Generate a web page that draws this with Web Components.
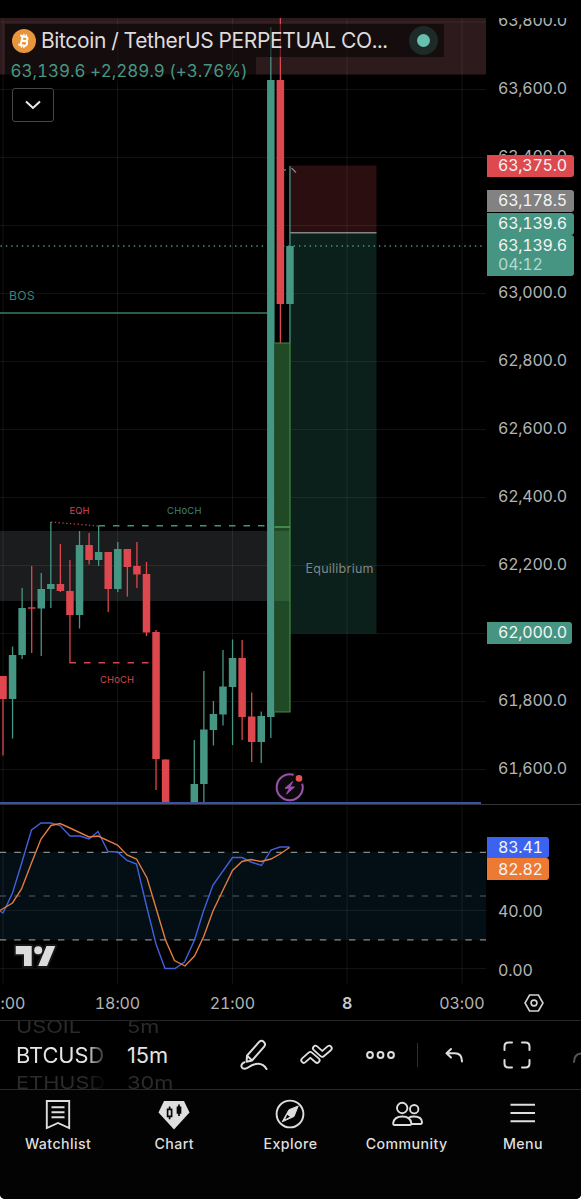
<!DOCTYPE html>
<html lang="en">
<head>
<meta charset="utf-8">
<title>BTCUSDT Chart</title>
<style>
  html, body {
    margin: 0;
    background: #fff;
  }
  body {
    font-family: Inter, "Liberation Sans", sans-serif;
  }
</style>
</head>
<body>
<chart-app></chart-app>

<template id="chart-app">
  <style>
    :host {
      display: flex;
      flex-direction: column;
      width: 581px;
      height: 1199px;
      overflow: hidden;
      background: #000;
      border-radius: 0 0 5px 5px;
      color: #b4b4b4;
      font-variant-numeric: tabular-nums;
    }
    .pane {
      display: flex;
      position: relative;
      box-sizing: border-box;
    }
    .main {
      height: 804px;
      padding-top: 18px;
    }
    .osc {
      height: 180px;
      border-top: 1px solid #343434;
    }
    chart-legend {
      position: absolute;
      left: 5px;
      top: 24px;
    }
    tv-logo {
      position: absolute;
      left: 11px;
      top: 136px;
    }
  </style>
  <div class="pane main">
    <price-chart></price-chart>
    <price-scale></price-scale>
    <chart-legend change="63,139.6 +2,289.9 (+3.76%)">Bitcoin / TetherUS PERPETUAL CO...</chart-legend>
  </div>
  <div class="pane osc">
    <stoch-chart></stoch-chart>
    <stoch-scale></stoch-scale>
    <tv-logo></tv-logo>
  </div>
  <time-scale></time-scale>
  <chart-toolbar></chart-toolbar>
  <tab-bar>
    <tab-item icon="watchlist">Watchlist</tab-item>
    <tab-item icon="chart">Chart</tab-item>
    <tab-item icon="explore">Explore</tab-item>
    <tab-item icon="community">Community</tab-item>
    <tab-item icon="menu">Menu</tab-item>
  </tab-bar>
</template>

<template id="chart-legend">
  <style>
    :host {
      display: flex;
      flex-direction: column;
      align-items: flex-start;
    }
    .title {
      display: flex;
      align-items: center;
      box-sizing: border-box;
      width: 438.5px;
      height: 33px;
      padding-left: 7px;
      background: rgba(0, 0, 0, .53);
      color: #dedbdb;
      font-size: 21px;
      white-space: nowrap;
    }
    .name {
      width: 361px;
      margin-left: 5px;
      letter-spacing: -.38px;
    }
    .status {
      display: flex;
      align-items: center;
      justify-content: center;
      width: 29px;
      height: 29px;
      margin-left: 7px;
      border-radius: 50%;
      background: #1d2a28;
    }
    .status i {
      width: 13.5px;
      height: 13.5px;
      border-radius: 50%;
      background: #67bfad;
    }
    .change {
      box-sizing: border-box;
      width: 251px;
      height: 27px;
      padding-left: 5.5px;
      background: rgba(0, 0, 0, .53);
      color: #459783;
      font-size: 17px;
      line-height: 29px;
      letter-spacing: -.05px;
      white-space: nowrap;
    }
    button {
      display: flex;
      align-items: center;
      justify-content: center;
      box-sizing: border-box;
      width: 42px;
      height: 34px;
      margin: 4px 0 0 7px;
      padding: 0;
      border: 1px solid #464646;
      border-radius: 3px;
      background: #000;
    }
  </style>
  <div class="title">
    <svg width="24" height="24" viewBox="0 0 24 24">
      <circle cx="12" cy="12" r="12" fill="#e9953b"/>
      <g transform="rotate(12 12 12)" fill="none" stroke="#fff" stroke-width="2">
        <path d="M7.2 7.5h5.6a2.1 2.1 0 0 1 0 4.3H9.4M7.2 16.5h6a2.3 2.3 0 0 0 0-4.7M9.6 7.5v9"/>
        <path d="M10.6 5v2.3M13.2 5v2.3M10.6 16.7V19M13.2 16.7V19" stroke-width="1.4"/>
      </g>
    </svg>
    <span class="name"><slot></slot></span>
    <span class="status"><i></i></span>
  </div>
  <div class="change"></div>
  <button>
    <svg width="18" height="12" viewBox="0 0 18 12" fill="none" stroke="#ececec" stroke-width="2">
      <path d="M2 2.5l7 6.5 7-6.5"/>
    </svg>
  </button>
</template>

<template id="price-scale">
  <style>
    :host {
      display: block;
      position: relative;
      width: 95px;
      overflow: hidden;
      font-size: 16px;
      letter-spacing: -.25px;
    }
    .labels {
      display: flex;
      flex-direction: column;
      margin-top: -32px;
    }
    .labels span {
      height: 68px;
      padding-left: 12px;
      line-height: 68px;
    }
    price-tag {
      position: absolute;
      left: 1px;
    }
  </style>
  <div class="labels"></div>
  <price-tag style="top:136.5px;--tag:#de4950">63,375.0</price-tag>
  <price-tag style="top:172px;--tag:#828282">63,178.5</price-tag>
  <price-tag style="top:194.5px">63,139.6</price-tag>
  <price-tag style="top:217px" timer="04:12">63,139.6</price-tag>
  <price-tag style="top:604px;--tag-width:85px">62,000.0</price-tag>
</template>

<template id="price-tag">
  <style>
    :host {
      display: block;
      box-sizing: border-box;
      width: var(--tag-width, 87px);
      height: 22.4px;
      padding-left: 11px;
      border-radius: 0 3px 3px 0;
      background: var(--tag, #469482);
      color: #f4f4f4;
      font-size: 16px;
      line-height: 21px;
    }
    :host([timer]) {
      height: 41px;
    }
    small {
      display: block;
      font-size: 16px;
      line-height: 17px;
      color: #b5d8cf;
    }
    small:empty {
      display: none;
    }
  </style>
  <slot></slot>
  <small></small>
</template>

<template id="stoch-scale">
  <style>
    :host {
      display: flex;
      flex-direction: column;
      box-sizing: border-box;
      width: 95px;
      padding: 31.5px 0 0 1px;
      font-size: 16px;
      letter-spacing: -.2px;
    }
    span {
      flex: none;
      height: 58.5px;
      padding-left: 11px;
      line-height: 20px;
    }
    .second {
      line-height: 23px;
    }
    .first {
      margin-top: 21.5px;
    }
  </style>
  <price-tag style="--tag:#3c63ee;--tag-width:62px">83.41</price-tag>
  <price-tag style="--tag:#ec7a32;--tag-width:62px;line-height:23px">82.82</price-tag>
  <span class="first">40.00</span>
  <span>0.00</span>
</template>

<template id="time-scale">
  <style>
    :host {
      display: flex;
      height: 36px;
      font-size: 16px;
      letter-spacing: -.1px;
      overflow: hidden;
      border-bottom: 1px solid #262626;
    }
    .times {
      display: flex;
      width: 487px;
    }
    .times span {
      flex: none;
      width: 114.8px;
      line-height: 38px;
      text-align: center;
    }
    .times span:first-child {
      margin-left: -54.7px;
    }
    b {
      font-weight: 600;
      color: #c9c9c9;
    }
    .settings {
      display: flex;
      flex: 1;
      align-items: center;
      justify-content: center;
      padding-top: 1px;
    }
  </style>
  <div class="times">
    <span>15:00</span><span>18:00</span><span>21:00</span><span><b>8</b></span><span>03:00</span>
  </div>
  <div class="settings">
    <svg width="20" height="18" viewBox="0 0 20 18" fill="none" stroke="#d4d4d4" stroke-width="1.6">
      <path d="M5.6 1h8.8L19 9l-4.6 8H5.6L1 9z"/>
      <circle cx="10" cy="9" r="2.9"/>
    </svg>
  </div>
</template>

<template id="chart-toolbar">
  <style>
    :host {
      display: grid;
      grid-template-columns: 111px 95px 63.5px 63.5px 63.5px 9.5px 63.5px 63.5px 63.5px;
      align-items: center;
      box-sizing: border-box;
      height: 69px;
      padding-left: 16px;
      overflow: hidden;
      border-bottom: 1px solid #2a2a2a;
    }
    svg {
      display: block;
      margin: 0 auto;
      overflow: visible;
      fill: none;
      stroke: #dedede;
      stroke-width: 2;
      stroke-linecap: round;
      stroke-linejoin: round;
    }
    .outer {
      stroke-width: 6.8;
    }
    .inner {
      stroke: #000;
      stroke-width: 3.2;
    }
    .sep {
      width: 1px;
      height: 24px;
      margin: auto;
      background: #2e2e2e;
    }
    .faded {
      stroke: #555;
    }
  </style>
  <wheel-picker values="USOIL,BTCUSD,ETHUSD" fade></wheel-picker>
  <wheel-picker values="5m,15m,30m"></wheel-picker>
  <svg width="28" height="32" viewBox="0 0 28 32">
    <path d="M7 16.7L19.4 2.6a3.5 3.5 0 0 1 5 4.7L12 21.5l-5.4 1.3zM7.3 16.9l4.5 4.3"/>
    <path d="M4.5 23.2c-3 1-3.6 3.8-2.6 5.3 1.2 1.7 4.4 1.5 7-.5 5-3.8 13.5-5.5 17.6 2"/>
  </svg>
  <svg width="32" height="20" viewBox="0 0 32 20">
    <path class="outer" d="M14.5 3.3l6.7 6 7-6"/>
    <path class="inner" d="M14.5 3.3l6.7 6 7-6"/>
    <path class="outer" d="M2.8 15.3l6.5-5.8 6.8 5.8"/>
    <path class="inner" d="M2.8 15.3l6.5-5.8 6.8 5.8"/>
  </svg>
  <svg width="30" height="10" viewBox="0 0 30 10">
    <circle cx="4" cy="5" r="2.9"/><circle cx="14.5" cy="5" r="2.9"/><circle cx="25" cy="5" r="2.9"/>
  </svg>
  <div class="sep"></div>
  <svg width="18" height="16" viewBox="0 0 18 16">
    <path d="M6 2L1.5 6.2 6 10.5M1.7 6.2h8q7.3 0 7.3 8.3"/>
  </svg>
  <svg width="28" height="28" viewBox="0 0 28 28">
    <path d="M1.5 9V5.5q0-4 4-4H9M19 1.5h3.5q4 0 4 4V9M26.5 19v3.5q0 4-4 4H19M9 26.5H5.5q-4 0-4-4V19"/>
  </svg>
  <svg class="faded" width="14" height="14" viewBox="0 0 14 14">
    <path d="M0 14q.5-8.500 7.500-8.500h5"/>
  </svg>
</template>

<template id="wheel-picker">
  <style>
    :host {
      display: flex;
      flex-direction: column;
      justify-content: center;
      height: 68px;
      overflow: hidden;
      font-size: 21.8px;
      font-variant-numeric: normal;
      color: #e4e4e4;
    }
    :host([fade]) {
      width: 88px;
      -webkit-mask-image: linear-gradient(90deg, #000 70px, rgba(0, 0, 0, .2) 88px);
      mask-image: linear-gradient(90deg, #000 70px, rgba(0, 0, 0, .2) 88px);
    }
    span {
      flex: none;
      height: 28.3px;
      line-height: 29px;
      white-space: nowrap;
    }
    .off {
      color: #2b2b2b;
      transform: scaleY(.78);
    }
  </style>
</template>

<template id="tab-bar">
  <style>
    :host {
      display: grid;
      grid-template-columns: repeat(5, 1fr);
      flex: 1;
      background: #030303;
    }
  </style>
  <slot></slot>
</template>

<template id="tab-item">
  <style>
    :host {
      display: flex;
      flex-direction: column;
      align-items: center;
      padding-top: 7px;
      color: #dedede;
      font-size: 14.2px;
      font-weight: 500;
      letter-spacing: .42px;
    }
    svg {
      width: 34px;
      height: 34px;
      fill: none;
      stroke: #dedede;
      stroke-width: 1.9;
    }
    .label {
      margin-top: 3px;
      line-height: 20px;
    }
  </style>
  <svg viewBox="0 0 34 34"></svg>
  <span class="label"><slot></slot></span>
</template>

<script>
  var UP = "#469684";
  var DOWN = "#de474d";

  // candle columns are 9.565px apart, the first one is centred on x=3
  function columnX(i) {
    return 3 + i * 9.565;
  }

  // [column, high, open/close top, open/close bottom, low, colour]
  var candles = [
    [0, 676, 676, 699, 755.5, DOWN],
    [1, 646.5, 655, 699, 738.5, UP],
    [2, 588, 608, 655, 659, UP],
    [3, 566, 607.3, 608.7, 653, DOWN],
    [4, 573, 589, 608.5, 656, UP],
    [5, 522, 584, 589, 608, UP],
    [6, 544, 584, 591, 592, DOWN],
    [7, 560, 591, 615, 663, DOWN],
    [8, 531, 545, 615, 628.5, UP],
    [9, 533, 545, 560, 564.5, DOWN],
    [10, 526, 552, 560, 566, UP],
    [11, 552, 552, 589, 612, DOWN],
    [12, 542, 549, 589, 592, UP],
    [13, 549, 549, 567, 596.5, DOWN],
    [14, 542, 566, 574.5, 588, DOWN],
    [15, 562, 574, 632.5, 636, DOWN],
    [16, 630, 632, 759, 790, DOWN],
    [17, 759.5, 759.5, 804, 804, DOWN],
    [20, 740, 784, 804, 804, UP],
    [21, 671, 729.5, 784, 804, UP],
    [22, 701, 714, 730, 745.5, UP],
    [23, 650, 686.5, 714.5, 725.5, UP],
    [24, 639.5, 658, 687, 745, UP],
    [25, 640, 658, 717, 740, DOWN],
    [26, 692.5, 716.5, 742, 762, DOWN],
    [27, 711.5, 716, 742, 763, UP],
    [28, 27, 80, 717, 738, UP],
    [29, 18, 80, 304, 343, DOWN],
    [30, 166, 246, 304, 343, UP]
  ];

  var kLine = "0,911 3,913 12.5,893 22,862 31.5,830 41,823 51,823 60,825.5 70,836 80,836 89,839 98,831.5 " +
    "108,851.5 117.5,852 127,860.5 136.5,864 146.5,906 156,944 165,968.5 175,968.5 184.5,962 194.5,940 " +
    "203.5,911 213,885 232.5,857.5 242,857.5 251,862 261.5,865.5 271,850 280,847 289.5,847";
  var dLine = "0,910.5 12.5,903 21.5,889 31.5,863 41,839 51,825.5 60,823.5 70,828 89,837 98,836 117.5,845 " +
    "127,855 136.5,859 147,878 156,908 165.5,940 174.5,960.5 185,966 194.5,956 203.5,937 213,911 223,890 " +
    "232.5,870.5 242,861.5 251,859.5 261,861.5 271,859 280,854 289.5,847.5";

  var tabIcons = {
    watchlist: '<path d="M5.8 4h22.4v27l-11.2-5-11.2 5zM10.5 10.3h13M10.5 15.3h13M10.5 20.3h13"/>',
    chart: '<path d="M7 4h20l5.5 11.5L17 32.5 1.5 15.5z" fill="#dedede" stroke="none"/>' +
      '<g stroke="#050505" stroke-width="1.7"><path d="M10.6 12.3h4v7h-4zM12.6 9.5v2.8M12.6 19.3v3"/>' +
      '<path d="M20.5 10.3h3v5.500h-3zM22 7.500v11.500" fill="#050505"/></g>',
    explore: '<circle cx="17" cy="17" r="13.4"/>' +
      '<path d="M25.2 9L16 12.700 9.200 24.800 21 19.500z" fill="#dedede" stroke="#dedede" stroke-width="1" stroke-linejoin="round"/>' +
      '<path d="M14.200 17.700l2.800 2-4.800 2.500z" fill="#030303" stroke="none"/>',
    community: '<circle cx="12.200" cy="11" r="5.200"/><circle cx="24.200" cy="12.200" r="4.200"/>' +
      '<path d="M4.500 28h15.500q1.500 0 1.300-2-1-6.500-9-6.500t-9.100 6.500q-.2 2 1.300 2zM19 20.500q2-1 5-1 7.500 0 8 5.500 0 2-1.500 2h-9.200"/>',
    menu: '<path d="M4.500 7.700h24.500M4.500 16h24.500M4.500 24.300h24.500"/>'
  };

  function stamp(el, id) {
    var root = el.attachShadow({ mode: "open" });
    root.appendChild(document.getElementById(id).content.cloneNode(true));
    return root;
  }

  function verticalGrid(top, bottom) {
    return [3, 117.5, 232.5, 347, 462].map(function (x) {
      return '<path d="M' + x + " " + top + "V" + bottom + '" stroke="#fff" stroke-opacity=".07"/>';
    }).join("");
  }

  function horizontalGrid(rows) {
    return rows.map(function (y) {
      return '<path d="M0 ' + y + 'H486" stroke="#fff" stroke-opacity=".07"/>';
    }).join("");
  }

  function drawCandle(c) {
    var x = columnX(c[0]);
    return '<path d="M' + x + " " + c[1] + "V" + c[4] + '" stroke="' + c[5] + '" stroke-width="1.3"/>' +
      '<rect x="' + (x - 3.75) + '" y="' + c[2] + '" width="7.5" height="' + (c[3] - c[2]) + '" fill="' + c[5] + '"/>';
  }

  function label(x, y, width, size, color, text) {
    return '<text x="' + x + '" y="' + y + '" textLength="' + width + '" font-size="' + size +
      '" fill="' + color + '">' + text + "</text>";
  }

  class ChartApp extends HTMLElement {
    constructor() {
      super();
      stamp(this, "chart-app");
    }
  }

  class ChartLegend extends HTMLElement {
    connectedCallback() {
      var root = stamp(this, "chart-legend");
      root.querySelector(".change").textContent = this.getAttribute("change");
    }
  }

  class PriceChart extends HTMLElement {
    constructor() {
      super();
      this.attachShadow({ mode: "open" });
    }

    connectedCallback() {
      this.shadowRoot.innerHTML =
        "<style>:host { display: block; width: 486px; } svg { display: block; }</style>" +
        '<svg width="486" height="786" viewBox="0 18 486 786" fill="none">' +
        this.zones() +
        horizontalGrid([89.5, 157.5, 225.5, 293.5, 361.5, 429.5, 497.5, 565.5, 633.5, 701.5, 769.5]) +
        verticalGrid(18, 804) +
        this.structure() +
        candles.map(drawCandle).join("") +
        this.orderBlock() +
        '<path d="M0.5 246H483" stroke="#459a85" stroke-width="1.4" stroke-dasharray="1.4 3.93"/>' +
        '<path d="M0 803H481" stroke="#3853a6" stroke-width="2"/>' +
        this.eventBadge() +
        "</svg>";
    }

    zones() {
      return '<rect y="18" width="486" height="56.5" fill="#2c1a1c"/>' +
        '<path d="M0 22H486" stroke="#3d2528"/>' +
        '<rect y="531" width="290" height="70" fill="#1b1c1e"/>' +
        '<rect x="290" y="165.5" width="86.5" height="67.5" fill="#2a0e10"/>' +
        '<rect x="290" y="233" width="86.5" height="400.5" fill="#0b1f1b"/>' +
        '<path d="M290 232.8H376.5" stroke="#858585" stroke-width="1.5"/>';
    }

    structure() {
      return '<path d="M0 313H267" stroke="#3c7a6d" stroke-width="1.7"/>' +
        '<path d="M51 522L98 526" stroke="#b5484b" stroke-width="1.3" stroke-dasharray="1.3 2.5"/>' +
        '<path d="M98.5 525.7H267" stroke="#44917f" stroke-width="1.5" stroke-dasharray="6.5 8"/>' +
        '<path d="M69.5 662.7H150" stroke="#cf474c" stroke-width="1.5" stroke-dasharray="6.5 8"/>' +
        '<path d="M283 171l3-1.5M291.5 168l4.5 4.5" stroke="#8f8484" stroke-width="1.2"/>' +
        label(9, 299.5, 25.5, 12.2, "#3f8575", "BOS") +
        label(69.5, 513.5, 20, 9.4, "#cf474c", "EQH") +
        label(167, 513.5, 34.5, 9.4, "#3f8575", "CHoCH") +
        label(100, 682.8, 34, 9.4, "#cf474c", "CHoCH") +
        label(305.5, 573.2, 68, 12.5, "#7d8886", "Equilibrium");
    }

    orderBlock() {
      return '<rect x="274.5" y="343" width="15.5" height="369" fill="#204a25"/>' +
        '<rect x="274.5" y="531" width="15.5" height="70" fill="#2d5e35"/>' +
        '<path d="M274.5 343H290V712H274.5" stroke="#448a3f" stroke-width="1.2"/>' +
        '<path d="M274.5 527H290" stroke="#56ab58" stroke-width="1.3"/>';
    }

    eventBadge() {
      return '<circle cx="289.7" cy="787.3" r="14.5" fill="#0b090c"/>' +
        '<path d="M293.7 774.9A13 13 0 1 0 302.2 783.7" stroke="#9a50ad" stroke-width="2"/>' +
        '<path d="M292.7 781.5L285 788.3h4.5L286.5 794l8-7h-4.7z" fill="#9a50ad" stroke="#9a50ad" stroke-linejoin="round"/>' +
        '<circle cx="299" cy="778.4" r="3.3" fill="#e4544f"/>';
    }
  }

  class StochChart extends HTMLElement {
    constructor() {
      super();
      this.attachShadow({ mode: "open" });
    }

    connectedCallback() {
      this.shadowRoot.innerHTML =
        "<style>:host { display: block; width: 486px; } svg { display: block; }</style>" +
        '<svg width="486" height="179" viewBox="0 805 486 179" fill="none">' +
        '<rect y="852" width="486" height="88" fill="#030e15"/>' +
        horizontalGrid([910.5, 968.5]) +
        verticalGrid(805, 983.5) +
        this.level(852.3, "#878b8d") +
        this.level(896, "#3a4347") +
        this.level(939.8, "#878b8d") +
        '<polyline points="' + kLine + '" stroke="#4161dc" stroke-width="1.4"/>' +
        '<polyline points="' + dLine + '" stroke="#e27d3f" stroke-width="1.4"/>' +
        "</svg>";
    }

    level(y, color) {
      return '<path d="M-.3 ' + y + 'H486" stroke="' + color + '" stroke-width="1.3" stroke-dasharray="6.5 8.05"/>';
    }
  }

  class PriceScale extends HTMLElement {
    constructor() {
      super();
      var labels = stamp(this, "price-scale").querySelector(".labels");
      // 63,200 and 62,000 are covered by their tags
      [63800, 63600, 63400, null, 63000, 62800, 62600, 62400, 62200, null, 61800, 61600].forEach(function (price) {
        var span = document.createElement("span");
        span.textContent = price ? price.toLocaleString("en-US") + ".0" : "";
        labels.appendChild(span);
      });
    }
  }

  class PriceTag extends HTMLElement {
    connectedCallback() {
      var root = stamp(this, "price-tag");
      root.querySelector("small").textContent = this.getAttribute("timer") || "";
    }
  }

  class StochScale extends HTMLElement {
    constructor() {
      super();
      stamp(this, "stoch-scale");
    }
  }

  class TimeScale extends HTMLElement {
    constructor() {
      super();
      stamp(this, "time-scale");
    }
  }

  class ChartToolbar extends HTMLElement {
    constructor() {
      super();
      stamp(this, "chart-toolbar");
    }
  }

  class WheelPicker extends HTMLElement {
    connectedCallback() {
      var root = stamp(this, "wheel-picker");
      this.getAttribute("values").split(",").forEach(function (value, i) {
        var span = document.createElement("span");
        span.textContent = value;
        if (i !== 1) span.className = "off";
        root.appendChild(span);
      });
    }
  }

  class TabBar extends HTMLElement {
    constructor() {
      super();
      stamp(this, "tab-bar");
    }
  }

  class TabItem extends HTMLElement {
    connectedCallback() {
      var root = stamp(this, "tab-item");
      root.querySelector("svg").innerHTML = tabIcons[this.getAttribute("icon")];
    }
  }

  class TvLogo extends HTMLElement {
    constructor() {
      super();
      this.attachShadow({ mode: "open" }).innerHTML =
        "<style>:host { display: block; } svg { display: block; }</style>" +
        '<svg width="48" height="30" viewBox="0 0 48 30">' +
        '<g fill="#dcdcdc" stroke="#161616" stroke-width="4" paint-order="stroke" stroke-linejoin="round">' +
        '<path d="M4.7 5H20.7V25H13V13.3H4.7z"/><path d="M35.5 5H44.3L36 25H27.2z"/>' +
        '<circle cx="27.2" cy="9.2" r="4"/></g></svg>';
    }
  }

  customElements.define("price-tag", PriceTag);
  customElements.define("tv-logo", TvLogo);
  customElements.define("chart-legend", ChartLegend);
  customElements.define("price-chart", PriceChart);
  customElements.define("stoch-chart", StochChart);
  customElements.define("price-scale", PriceScale);
  customElements.define("stoch-scale", StochScale);
  customElements.define("time-scale", TimeScale);
  customElements.define("wheel-picker", WheelPicker);
  customElements.define("chart-toolbar", ChartToolbar);
  customElements.define("tab-item", TabItem);
  customElements.define("tab-bar", TabBar);
  customElements.define("chart-app", ChartApp);
</script>
</body>
</html>
